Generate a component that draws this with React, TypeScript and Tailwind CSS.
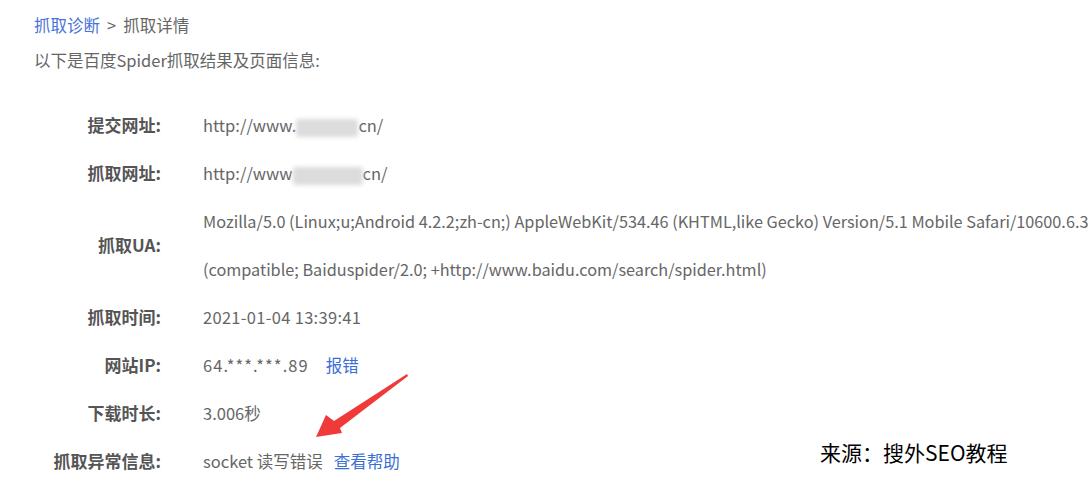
import React from "react";

const font = { fontFamily: '"Noto Sans CJK SC", "Noto Sans", sans-serif' };

function Blur({ w }: { w: number }) {
  return (
    <span className="relative inline-block align-middle" style={{ width: w, height: 18 }}>
      <span className="absolute inset-0 rounded-[3px] bg-[#dcdcdc] blur-[2px]" />
    </span>
  );
}

type Row = { label: string; value: React.ReactNode; tall?: boolean };

export default function App() {
  const rows: Row[] = [
    {
      label: "提交网址:",
      value: (
        <span>
          http://www.
          <Blur w={62} />
          cn/
        </span>
      ),
    },
    {
      label: "抓取网址:",
      value: (
        <span>
          http://www
          <Blur w={70} />
          cn/
        </span>
      ),
    },
    {
      label: "抓取UA:",
      tall: true,
      value: (
        <div className="text-[16.25px]">
          <div className="h-12 leading-[48px] whitespace-nowrap">
            Mozilla/5.0 (Linux;u;Android 4.2.2;zh-cn;) AppleWebKit/534.46 (KHTML,like Gecko) Version/5.1 Mobile Safari/10600.6.3
          </div>
          <div className="h-12 leading-[48px] whitespace-nowrap">
            (compatible; Baiduspider/2.0; +http://www.baidu.com/search/spider.html)
          </div>
        </div>
      ),
    },
    { label: "抓取时间:", value: <span className="tracking-[0.3px]">2021-01-04 13:39:41</span> },
    {
      label: "网站IP:",
      value: (
        <span>
          <span className="tracking-[1.1px]">64.***.***.89</span>
          <span className="ml-[17px] text-[#3b6fd6]">报错</span>
        </span>
      ),
    },
    { label: "下载时长:", value: "3.006秒" },
    {
      label: "抓取异常信息:",
      value: (
        <span>
          socket 读写错误<span className="ml-[11px] text-[#3b6fd6]">查看帮助</span>
        </span>
      ),
    },
  ];

  return (
    <div className="relative w-[1092px] h-[486px] overflow-hidden bg-white text-[#666] text-[16.5px]" style={font}>
      <div className="pl-[34px] pt-[10px]">
        <div className="h-[30px] leading-[30px]">
          <span className="text-[#4a72d8]">抓取诊断</span>
          <span className="mx-[7px]">&gt;</span>
          <span>抓取详情</span>
        </div>
        <div className="h-[30px] leading-[30px] mt-[5px]">以下是百度Spider抓取结果及页面信息:</div>
      </div>
      <div className="mt-[26px] pl-[34px]">
        {rows.map((r) => (
          <div key={r.label} className="flex items-center">
            <div
              className={`w-[127px] shrink-0 whitespace-nowrap text-right text-[17px] font-bold text-[#555] ${r.tall ? "h-24 leading-[96px]" : "h-12 leading-[48px]"}`}
            >
              {r.label}
            </div>
            <div className={`ml-[42px] shrink-0 whitespace-nowrap ${r.tall ? "" : "h-12 leading-[48px]"}`}>{r.value}</div>
          </div>
        ))}
      </div>
      <svg className="absolute left-[310px] top-[370px]" width="100" height="72" viewBox="0 0 100 72">
        <path d="M97 4 L98 6 L30 58 L32 63 L6 67 L16 45 L24 51 Z" fill="#f03a3a" />
      </svg>
      <div
        className="absolute left-[820px] top-[437px] text-[21px] leading-[30px] text-black"
        style={{ fontFamily: '"Noto Sans CJK SC", sans-serif' }}
      >
        来源：搜外SEO教程
      </div>
    </div>
  );
}
